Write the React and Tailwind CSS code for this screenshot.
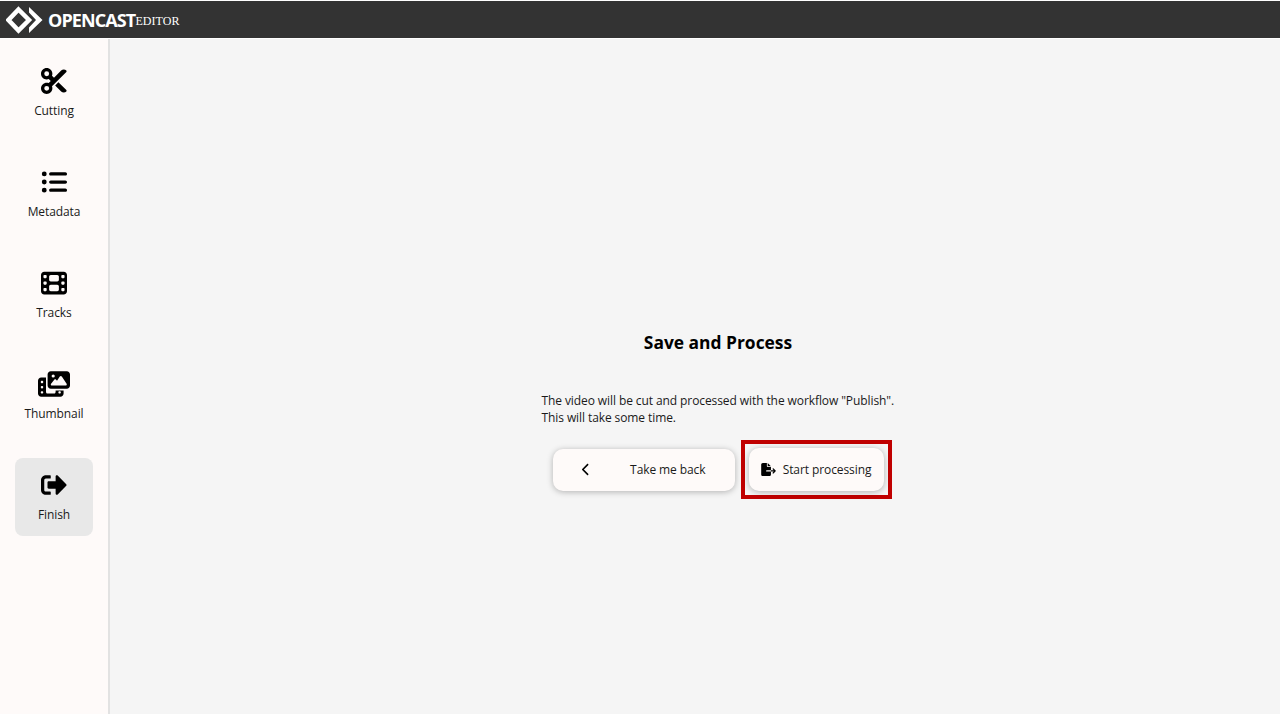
import React from "react";
import { FaScissors, FaListUl, FaFilm, FaPhotoFilm, FaChevronLeft, FaFileExport } from "react-icons/fa6";
import { FaSignOutAlt } from "react-icons/fa";

const nav = [
  { label: "Cutting", Icon: FaScissors, cls: "w-[26px] h-[26px]" },
  { label: "Metadata", Icon: FaListUl, cls: "w-[26px] h-[26px]" },
  { label: "Tracks", Icon: FaFilm, cls: "w-[26px] h-[26px]" },
  { label: "Thumbnail", Icon: FaPhotoFilm, cls: "w-[32px] h-[26px]" },
  { label: "Finish", Icon: FaSignOutAlt, cls: "w-[26px] h-[26px]", active: true },
];

function Logo() {
  return (
    <svg width="37" height="28" viewBox="0 0 37 28" className="shrink-0">
      <path fill="none" stroke="#fff" strokeWidth="4.5" d="M12.5 3.5 L23 14 L12.5 24.5 L2.5 14 Z" />
      <path fill="#fff" d="M23 1 L36.5 14 L23 27 L23 21.5 L30 14 L23 6.5 Z" />
    </svg>
  );
}

export default function App() {
  return (
    <div className="h-[714px] flex flex-col overflow-hidden bg-[#f5f5f5] text-[12px] tracking-[-0.09px] text-[#1a1a1a] font-['Open_Sans','Noto_Sans',sans-serif]">
      <header className="h-[39px] shrink-0 pt-px bg-white">
        <div className="h-[37px] bg-[#333333] flex items-center pl-[6px] text-white">
          <Logo />
          <span className="ml-[5px] text-[18px] font-bold tracking-[-0.9px] font-['Open_Sans',sans-serif] leading-none">OPENCAST</span>
          <span className="text-[12px] tracking-[0.05px] font-['Liberation_Serif',serif] leading-none mt-[3px]">EDITOR</span>
        </div>
      </header>
      <div className="flex flex-1 min-h-0">
        <nav className="w-[110px] shrink-0 bg-[#fefaf9] border-r-2 border-[#e2e2e2] flex flex-col items-center pt-[15px] gap-[23px]">
          {nav.map(({ label, Icon, active, cls }) => (
            <div
              key={label}
              className={`w-[78px] h-[78px] rounded-lg flex flex-col items-center pt-[14px] ${active ? "bg-[#e8e8e8]" : ""}`}
            >
              <Icon className={`${cls} text-black`} />
              <span className="mt-[8px] leading-[18px] whitespace-nowrap">{label}</span>
            </div>
          ))}
        </nav>
        <main className="flex-1 flex flex-col items-center pt-[291px] pl-[46px]">
          <h1 className="text-[17.4px] tracking-normal font-bold leading-[24px] text-black">Save and Process</h1>
          <p className="mt-[38px] w-[353px] leading-[17px] whitespace-nowrap">
            The video will be cut and processed with the workflow "Publish".
            <br />
            This will take some time.
          </p>
          <div className="mt-[14px] ml-[8px] flex items-center gap-[6px]">
            <button className="w-[182px] h-[42px] rounded-[10px] bg-[#fefaf9] shadow-[0_1px_6px_rgba(0,0,0,0.28)] flex items-center pl-[28px] pr-[29px] justify-between">
              <FaChevronLeft className="w-[10px] h-[13px] text-black" />
              <span>Take me back</span>
            </button>
            <div className="border-[4px] border-[#c00000] p-[4px]">
              <button className="w-[135px] h-[43px] rounded-[10px] bg-[#fefaf9] shadow-[0_1px_6px_rgba(0,0,0,0.28)] flex items-center justify-center gap-[7px]">
                <FaFileExport className="w-[15px] h-[13px] text-black" />
                <span>Start processing</span>
              </button>
            </div>
          </div>
        </main>
      </div>
    </div>
  );
}
